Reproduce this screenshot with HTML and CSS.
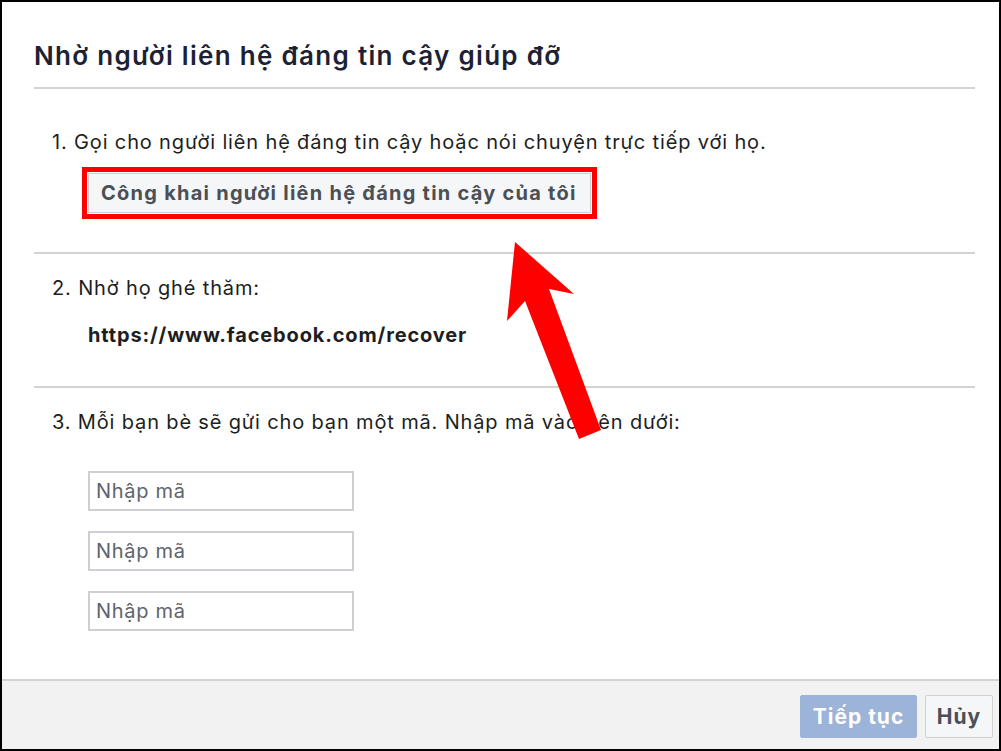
FILE: index.html
```html
<!DOCTYPE html>
<html lang="vi">
<head>
<meta charset="utf-8">
<title>Nhờ người liên hệ đáng tin cậy giúp đỡ</title>
<link rel="stylesheet" href="styles.css">
</head>
<body>
<div class="frame">
  <div class="main">
    <div class="head">
      <h1 class="title">Nhờ người liên hệ đáng tin cậy giúp đỡ</h1>
    </div>
    <div class="sec sec1">
      <p class="step">1. Gọi cho người liên hệ đáng tin cậy hoặc nói chuyện trực tiếp với họ.</p>
      <div class="highlight">
        <button class="reveal" type="button">Công khai người liên hệ đáng tin cậy của tôi</button>
      </div>
    </div>
    <div class="sec sec2">
      <p class="step">2. Nhờ họ ghé thăm:</p>
      <p class="url">https://www.facebook.com/recover</p>
    </div>
    <div class="sec3">
      <p class="step">3. Mỗi bạn bè sẽ gửi cho bạn một mã. Nhập mã vào bên dưới:</p>
      <div class="codes">
        <input class="code" type="text" placeholder="Nhập mã">
        <input class="code" type="text" placeholder="Nhập mã">
        <input class="code" type="text" placeholder="Nhập mã">
      </div>
    </div>
  </div>
  <div class="footer">
    <button class="btn btn-primary" type="button">Tiếp tục</button>
    <button class="btn btn-cancel" type="button">Hủy</button>
  </div>
  <svg class="arrow" width="1001" height="751" viewBox="0 0 1001 751" aria-hidden="true">
    <polygon points="515,242 574,294 549,289 601,430 579,439 525,301 507,321" fill="#ff0000"/>
  </svg>
</div>
</body>
</html>
```
FILE: styles.css
```css
html, body {
  margin: 0;
  padding: 0;
  background: #ffffff;
}

body {
  font-family: Inter, "Noto Sans", "Liberation Sans", sans-serif;
  color: #1c1e21;
}

.frame {
  position: relative;
  width: 1001px;
  height: 751px;
  box-sizing: border-box;
  border: 2px solid #000000;
  display: flex;
  flex-direction: column;
  background: #ffffff;
  overflow: hidden;
}

.main {
  flex: 1;
  padding: 0 24px 0 32px;
}

.head {
  padding-top: 39px;
  padding-bottom: 16px;
  border-bottom: 2px solid #d3d3d3;
}

.title {
  margin: 0;
  font-size: 26px;
  line-height: 30px;
  font-weight: 600;
  letter-spacing: 1.3px;
  color: #1c2234;
}

.sec {
  border-bottom: 2px solid #d3d3d3;
}

.step {
  margin: 0;
  padding-left: 18px;
  font-size: 20px;
  line-height: 24px;
  letter-spacing: 0.85px;
  color: #1c1e21;
}

.sec1 {
  padding-top: 41px;
  padding-bottom: 33px;
}

.highlight {
  display: inline-block;
  margin-top: 13px;
  margin-left: 48px;
  border: 5px solid #ff0000;
  padding: 1px;
}

.reveal {
  display: block;
  height: 40px;
  box-sizing: border-box;
  padding: 0 13px 0 12px;
  border: 1px solid #ccd0d5;
  background: #f5f6f7;
  font-family: inherit;
  font-size: 20px;
  font-weight: 700;
  letter-spacing: 1.25px;
  color: #4b4f56;
}

.sec2 {
  padding-top: 22px;
  padding-bottom: 39px;
}

.url {
  margin: 23px 0 0 54px;
  font-size: 20px;
  line-height: 24px;
  font-weight: 700;
  letter-spacing: 0.85px;
  color: #1c1e21;
}

.sec3 {
  padding-top: 22px;
}

.codes {
  margin-top: 37px;
  margin-left: 54px;
  display: flex;
  flex-direction: column;
  gap: 20px;
}

.code {
  width: 266px;
  height: 40px;
  box-sizing: border-box;
  border: 2px solid #ccd0d5;
  padding: 0 6px;
  font-family: inherit;
  font-size: 20px;
  letter-spacing: 0.7px;
  color: #1c1e21;
  outline: none;
}

.code::placeholder {
  color: #5d636b;
  opacity: 1;
}

.footer {
  height: 70px;
  box-sizing: border-box;
  border-top: 2px solid #d3d3d3;
  background: #f2f2f2;
  display: flex;
  justify-content: flex-end;
  align-items: flex-start;
  gap: 8px;
  padding: 14px 6px 0 0;
}

.btn {
  height: 43px;
  box-sizing: border-box;
  font-family: inherit;
  font-size: 21px;
  font-weight: 700;
  letter-spacing: 1px;
  border-radius: 2px;
  padding: 0;
}

.btn-primary {
  width: 117px;
  background: #9cb4d8;
  border: 1px solid #9cb4d8;
  color: #ffffff;
}

.btn-cancel {
  width: 68px;
  background: #f5f6f7;
  border: 1px solid #ced0d4;
  color: #4b4f56;
}

.arrow {
  position: absolute;
  top: -2px;
  left: -2px;
  pointer-events: none;
}
```
